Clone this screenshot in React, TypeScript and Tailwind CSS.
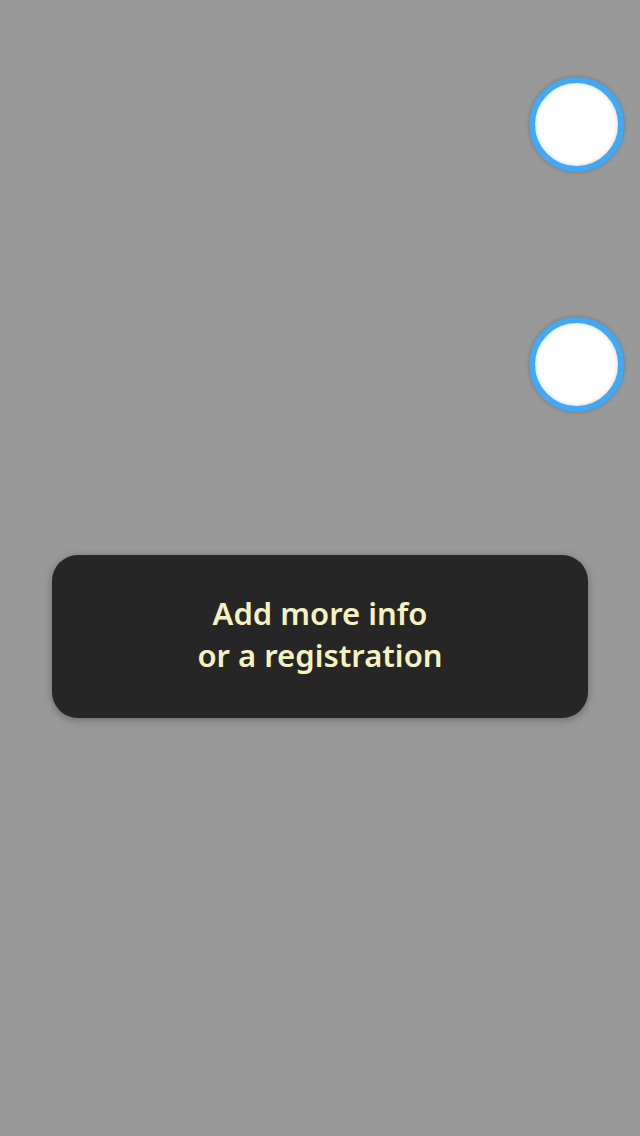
import React from "react";

function Dot({ className = "" }: { className?: string }) {
  return (
    <div
      className={`self-end mr-[16px] h-[95px] w-[95px] rounded-full border-[6px] border-[#3fa9f5] bg-white shadow-[0_0_4px_rgba(0,0,0,0.25),inset_0_0_4px_rgba(0,0,0,0.2)] ${className}`}
    />
  );
}

export default function App() {
  return (
    <div className="min-h-[1136px] w-[640px] bg-[#999999] flex flex-col pt-[77px]">
      <Dot />
      <Dot className="mt-[145px]" />
      <div className="mt-[143px] mx-[52px] h-[163px] rounded-[26px] bg-[#262626] shadow-[0_2px_8px_rgba(0,0,0,0.3)] flex items-center justify-center">
        <p
          className="text-center text-[#f6f2c0] font-semibold text-[31px] leading-[42px] mb-[6px]"
          style={{ fontFamily: '"Source Sans Pro", "Noto Sans", sans-serif' }}
        >
          Add more info
          <br />
          or a registration
        </p>
      </div>
    </div>
  );
}
